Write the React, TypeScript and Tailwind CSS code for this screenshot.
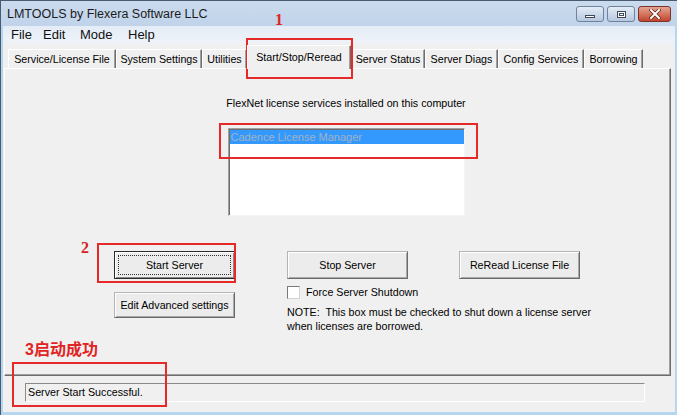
import React from 'react';

const tabs = [
  { label: 'Service/License File', w: 'w-[108px]' },
  { label: 'System Settings', w: 'w-[86px]' },
  { label: 'Utilities', w: 'w-[45px]' },
  { label: 'Start/Stop/Reread', w: 'w-[104px]', active: true },
  { label: 'Server Status', w: 'w-[74px]' },
  { label: 'Server Diags', w: 'w-[73px]' },
  { label: 'Config Services', w: 'w-[86px]' },
  { label: 'Borrowing', w: 'w-[59px]' },
];

function WinButton({ label, isDefault = false, className = '' }: { label: string; isDefault?: boolean; className?: string }) {
  return (
    <div
      className={`relative h-[28px] w-[121px] flex items-center justify-center bg-[#ececec] border ${
        isDefault
          ? 'border-[#2a2a2a] shadow-[inset_1px_1px_0_#fff,inset_-1px_-1px_0_#8a8a8a]'
          : 'border-[#b4b4b4] border-r-[#6a6a6a] border-b-[#6a6a6a] shadow-[inset_1px_1px_0_#fff,inset_-1px_-1px_0_#a8a8a8]'
      } ${className}`}
    >
      {isDefault && <div className="absolute inset-[3px] border border-dotted border-[#333]"></div>}
      <span>{label}</span>
    </div>
  );
}

export default function App() {
  return (
    <div className="relative w-[677px] h-[415px] overflow-hidden flex flex-col bg-[#b4d6ee] border-t border-l border-[#4a5a70] font-['Liberation_Sans',Arial,sans-serif] text-[10.7px] text-black">
      {/* Title bar */}
      <div className="h-[25px] flex items-start pl-[6px] pr-[6px] bg-linear-to-b from-[#cbdbee] to-[#c0d3ea]">
        <span className="mt-[5px] text-[12.5px] leading-[16px] text-[#1b1b1b]">LMTOOLS by Flexera Software LLC</span>
        <div className="ml-auto mt-[5px] flex gap-[3px]">
          <div className="w-[28px] h-[16px] rounded-[3px] border border-[#71839c] bg-linear-to-b from-[#e4ecf6] to-[#b7c8de] flex items-end justify-center pb-[3px]">
            <div className="w-[10px] h-[3px] bg-white border border-[#3e4a5c]"></div>
          </div>
          <div className="w-[28px] h-[16px] rounded-[3px] border border-[#71839c] bg-linear-to-b from-[#e4ecf6] to-[#b7c8de] flex items-center justify-center">
            <div className="w-[9px] h-[7px] border border-[#3e4a5c] bg-white flex items-center justify-center">
              <div className="w-[5px] h-[3px] border border-[#3e4a5c]"></div>
            </div>
          </div>
          <div className="w-[33px] h-[16px] rounded-[3px] border border-[#7b3528] bg-linear-to-b from-[#e4a391] to-[#c0442d] flex items-center justify-center">
            <svg width="12" height="10" viewBox="0 0 12 10">
              <path d="M2 1 L10 9 M10 1 L2 9" stroke="#5a2418" strokeWidth="3.4" strokeLinecap="square" />
              <path d="M2 1 L10 9 M10 1 L2 9" stroke="#ffffff" strokeWidth="2" strokeLinecap="square" />
            </svg>
          </div>
        </div>
      </div>

      {/* Menu bar */}
      <div className="h-[17px] mx-[2px] flex items-center pl-[8px] text-[13px] leading-[17px] bg-linear-to-b from-[#e4ecf6] to-[#eef3f9] text-[#111]">
        <span className="w-[32px]">File</span>
        <span className="w-[37px]">Edit</span>
        <span className="w-[48px]">Mode</span>
        <span>Help</span>
      </div>

      {/* Client area */}
      <div className="flex-1 mx-[2px] mb-[3px] bg-[#f0f0f0] flex flex-col">
        {/* Tabs */}
        <div className="h-[25px] flex items-end pl-[5px]">
          {tabs.map(t => (
            <div
              key={t.label}
              className={`${t.w} flex items-center justify-center border-t border-l border-white border-r border-r-[#6d6d6d] shadow-[inset_-1px_0_0_#a0a0a0] whitespace-nowrap ${
                t.active ? 'h-[24px] -mb-px relative z-10 bg-[#f0f0f0]' : 'h-[19px]'
              }`}
            >
              {t.label}
            </div>
          ))}
        </div>

        {/* Tab panel */}
        <div className="ml-[1px] mr-[4px] h-[308px] border-t border-l border-white border-r border-b border-r-[#6d6d6d] border-b-[#6d6d6d] shadow-[inset_-1px_-1px_0_#a0a0a0] flex flex-col">
          <div className="ml-[216px] w-[250px] flex flex-col items-center">
            <div className="mt-[28px] leading-[13px] whitespace-nowrap">FlexNet license services installed on this computer</div>
            <div className="mt-[18px] w-[237px] h-[88px] bg-white border border-t-[#a0a0a0] border-l-[#a0a0a0] border-r-[#f4f4f4] border-b-[#f4f4f4] shadow-[inset_1px_1px_0_#6d6d6d] pt-px pl-px">
              <div className="h-[14px] bg-[#3399ff] text-[#a3b1c2] leading-[14px] pl-[1px] text-[11px]">Cadence License Manager</div>
            </div>
          </div>

          <div className="mt-[35px] pl-[109px] flex">
            <div className="flex flex-col">
              <WinButton label="Start Server" isDefault />
              <WinButton label="Edit Advanced settings" className="mt-[13px] !h-[26px]" />
            </div>
            <div className="ml-[52px] w-[121px] flex flex-col">
              <WinButton label="Stop Server" />
              <div className="mt-[7px] flex items-center gap-[6px] leading-[13px] whitespace-nowrap">
                <div className="w-[13px] h-[13px] shrink-0 bg-white border border-[#7a7a7a] border-r-[#d4d4d4] border-b-[#d4d4d4]"></div>
                <span>Force Server Shutdown</span>
              </div>
              <div className="mt-[6px] leading-[14px] whitespace-nowrap">
                NOTE:&nbsp; This box must be checked to shut down a license server
                <br />
                when licenses are borrowed.
              </div>
            </div>
            <div className="ml-[51px]">
              <WinButton label="ReRead License File" />
            </div>
          </div>
        </div>

        {/* Status bar */}
        <div className="mt-[7px] ml-[22px] w-[620px] h-[19px] border border-t-[#8a8a8a] border-l-[#8a8a8a] border-r-white border-b-white flex items-center pl-[2px] leading-[13px]">
          Server Start Successful.
        </div>
      </div>

      {/* Red annotations */}
      <div className="absolute left-[274px] top-[11px] text-[16px] leading-none font-bold text-[#e02424] font-['Liberation_Serif',serif]">1</div>
      <div className="absolute left-[245px] top-[37px] w-[107px] h-[41px] border-2 border-[#e62a2a]"></div>
      <div className="absolute left-[218px] top-[122px] w-[259px] h-[36px] border-2 border-[#e62a2a]"></div>
      <div className="absolute left-[80px] top-[239px] text-[16px] leading-none font-bold text-[#d42222] font-['Liberation_Serif',serif]">2</div>
      <div className="absolute left-[96px] top-[242px] w-[139px] h-[40px] border-2 border-[#e62a2a]"></div>
      <div className="absolute left-[24px] top-[340px] text-[16px] leading-[18px] font-bold text-[#e02424] font-['Liberation_Sans','Noto_Sans_CJK_SC',sans-serif]">3启动成功</div>
      <div className="absolute left-[11px] top-[361px] w-[155px] h-[45px] border-2 border-[#e62a2a]"></div>
    </div>
  );
}
